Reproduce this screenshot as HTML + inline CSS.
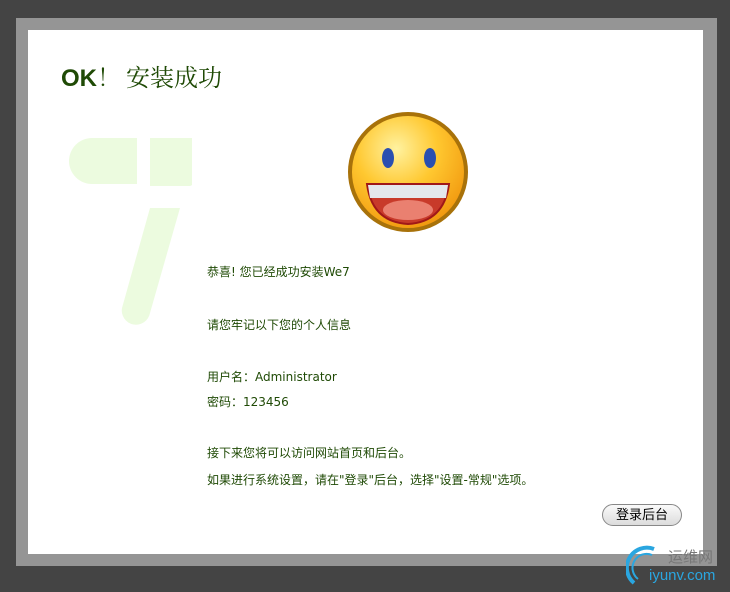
<!DOCTYPE html>
<html><head><meta charset="utf-8"><style>
html,body{margin:0;padding:0;width:730px;height:592px;background:#444;overflow:hidden;font-family:"Liberation Sans","Noto Sans CJK SC",sans-serif;}
.frame{position:absolute;left:16px;top:18px;width:701px;height:548px;background:#959595;}
.panel{position:absolute;left:28px;top:30px;width:675px;height:524px;background:#fff;}
h1{position:absolute;left:33px;top:28px;margin:0;font-size:24px;color:#1f4a05;font-weight:normal;white-space:nowrap;font-family:"Liberation Serif","Noto Serif CJK SC",serif}
h1 b{font-family:"Liberation Sans",sans-serif;font-weight:bold;}
.t{position:absolute;left:179px;font-size:12px;color:#1f4a05;white-space:nowrap;font-family:"DejaVu Sans","Noto Sans CJK SC",sans-serif}
.btn{position:absolute;left:574px;top:474px;width:78px;height:20px;border:1px solid #888;border-radius:11px;background:linear-gradient(#fafafa,#dcdcdc);font-size:13px;color:#000;text-align:center;line-height:20px}
</style></head><body>
<div class="frame"></div>
<div class="panel">
<h1><b>OK</b>！<span style="margin-left:5px">安装成功</span></h1>
<svg style="position:absolute;left:34px;top:108px" width="130" height="190" viewBox="0 0 130 190">
<path d="M30 0 H75 V46 H30 A23 23 0 0 1 30 0Z" fill="#ecfbdf"/>
<path d="M88 0 H135 A28 28 0 0 1 128 48 H88Z" fill="#ecfbdf"/>
<path d="M88 70 H118 L88 175 A14 14 0 0 1 60 170 Z" fill="#ecfbdf"/>
</svg>
<svg style="position:absolute;left:319px;top:82px" width="122" height="122" viewBox="0 0 122 122">
<defs><radialGradient id="g" cx="40%" cy="30%" r="70%"><stop offset="0" stop-color="#fff2a0"/><stop offset=".5" stop-color="#ffc830"/><stop offset="1" stop-color="#f29a10"/></radialGradient></defs>
<circle cx="61" cy="60" r="58" fill="url(#g)" stroke="#a8720a" stroke-width="4"/>
<ellipse cx="41" cy="46" rx="6" ry="10" fill="#2a4fb0"/>
<ellipse cx="83" cy="46" rx="6" ry="10" fill="#2a4fb0"/>
<path d="M20 72 H102 Q97 110 61 112 Q25 110 20 72Z" fill="#c83a2a" stroke="#a01818" stroke-width="2"/>
<path d="M21 73 H101 L99 86 H23Z" fill="#e4e8ec"/>
<ellipse cx="61" cy="98" rx="25" ry="10" fill="#ea8070"/>
</svg>
<div class="t" style="top:233px">恭喜! 您已经成功安装We7</div>
<div class="t" style="top:286px">请您牢记以下您的个人信息</div>
<div class="t" style="top:338px">用户名：Administrator</div>
<div class="t" style="top:363px">密码：123456</div>
<div class="t" style="top:414px">接下来您将可以访问网站首页和后台。</div>
<div class="t" style="top:441px">如果进行系统设置，请在"登录"后台，选择"设置-常规"选项。</div>
<div class="btn">登录后台</div>
</div>
<svg style="position:absolute;left:626px;top:543px" width="30" height="45" viewBox="0 0 30 45"><path d="M28 6 A20 20 0 0 0 8 40" fill="none" stroke="#2aa6e0" stroke-width="4"/><path d="M26 12 A14 14 0 0 0 12 36" fill="none" stroke="#2aa6e0" stroke-width="2"/></svg>
<div style="position:absolute;left:668px;top:546px;font-size:15px;color:#777;">运维网</div>
<div style="position:absolute;left:649px;top:567px;font-size:15px;color:#2aa6e0;font-family:'Liberation Sans',sans-serif">iyunv.com</div>
</body></html>
